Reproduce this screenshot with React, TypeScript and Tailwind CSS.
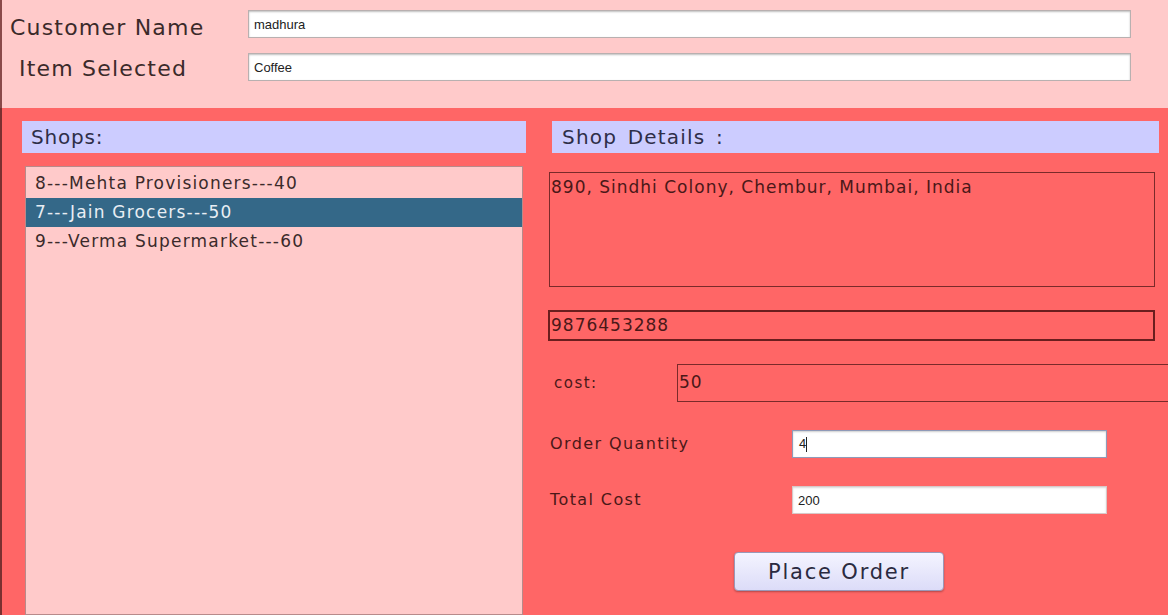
import React from "react";

const shops = [
  { id: 8, name: "Mehta Provisioners", cost: 40 },
  { id: 7, name: "Jain Grocers", cost: 50 },
  { id: 9, name: "Verma Supermarket", cost: 60 },
];

const font = { fontFamily: '"DejaVu Sans", "Open Sans", sans-serif' };
const arial = { fontFamily: '"Liberation Sans", Arial, sans-serif' };

export default function App() {
  return (
    <div
      className="w-[1168px] h-[615px] overflow-hidden flex flex-col text-[#3b2a2a]"
      style={font}
    >
      {/* customer info */}
      <div className="h-[108px] bg-[#ffcaca] border-l-2 border-[#8a4a4a] flex flex-col pt-[10px] gap-[15px]">
        <div className="flex items-center h-[28px]">
          <span className="w-[246px] pl-[8px] pt-[6px] text-[22px] tracking-[1.2px]">Customer Name</span>
          <input
            readOnly
            value="madhura"
            className="w-[883px] h-[28px] bg-white border border-[#b8b0b0] shadow-[inset_0_1px_2px_rgba(0,0,0,0.25)] px-[5px] text-[13px] text-[#222] outline-none"
            style={arial}
          />
        </div>
        <div className="flex items-center h-[28px]">
          <span className="w-[246px] pl-[17px] pt-[2px] text-[22px] tracking-[1.2px]">Item Selected</span>
          <input
            readOnly
            value="Coffee"
            className="w-[883px] h-[28px] bg-white border border-[#b8b0b0] shadow-[inset_0_1px_2px_rgba(0,0,0,0.25)] px-[5px] text-[13px] text-[#222] outline-none"
            style={arial}
          />
        </div>
      </div>

      {/* order panel */}
      <div className="flex-1 bg-[#ff6666] border-l-2 border-[#7a3030] flex min-h-0">
        {/* shops */}
        <div className="w-[504px] ml-[20px] flex flex-col pt-[13px]">
          <div className="h-[32px] bg-[#ccccff] pl-[9px] flex items-center text-[20px] tracking-[0.8px] text-[#2e2e48]">
            Shops:
          </div>
          <div className="flex-1 mt-[13px] mx-[3px] bg-[#ffcaca] border border-[#b88a8a] pt-[2px]">
            {shops.map((s) => (
              <div
                key={s.id}
                className={
                  s.id === 7
                    ? "h-[29px] pl-[9px] flex items-center text-[17px] tracking-[1.2px] bg-[#346888] text-[#e8eef4]"
                    : "h-[29px] pl-[9px] flex items-center text-[17px] tracking-[1.2px] text-[#3b2a2a]"
                }
              >
                {s.id}---{s.name}---{s.cost}
              </div>
            ))}
          </div>
        </div>

        {/* details */}
        <div className="flex-1 ml-[22px] flex flex-col pt-[13px] text-[#4a1818]">
          <div className="h-[32px] w-[607px] ml-[4px] bg-[#ccccff] pl-[10px] flex items-center text-[20px] tracking-[1.2px] [word-spacing:3px] text-[#2e2e48]">
            Shop Details :
          </div>
          <div className="mt-[19px] ml-[1px] w-[606px] h-[115px] border border-[#7a2a2a] text-[17px] tracking-[1px] pl-[1px] pt-[2px]">
            890, Sindhi Colony, Chembur, Mumbai, India
          </div>
          <div className="mt-[23px] w-[607px] h-[31px] border-2 border-[#6a1e1e] flex items-center pl-[1px] text-[17px] tracking-[1px]">
            9876453288
          </div>
          <div className="mt-[23px] h-[38px] flex items-center">
            <span className="w-[129px] pl-[6px] text-[15px] tracking-[1.5px]">cost:</span>
            <div className="flex-1 h-[38px] border border-[#7a2a2a] border-r-0 flex items-center pl-[1px] text-[17px] tracking-[1px]">
              50
            </div>
          </div>
          <div className="mt-[28px] h-[28px] flex items-center">
            <span className="w-[244px] pl-[2px] text-[16px] tracking-[1.4px]">Order Quantity</span>
            <div
              className="w-[315px] h-[28px] bg-white border border-[#8f9ab8] shadow-[inset_0_1px_2px_rgba(0,0,0,0.2)] flex items-center pl-[6px] text-[13px] text-[#222]"
              style={arial}
            >
              4<span className="w-px h-[15px] bg-[#222]" />
            </div>
          </div>
          <div className="mt-[28px] h-[28px] flex items-center">
            <span className="w-[244px] pl-[2px] text-[16px] tracking-[1.4px]">Total Cost</span>
            <input
              readOnly
              value="200"
              className="w-[315px] h-[28px] bg-white border border-[#d8c8c8] shadow-[inset_0_1px_2px_rgba(0,0,0,0.15)] pl-[5px] text-[13px] text-[#222] outline-none"
              style={arial}
            />
          </div>
          <div className="mt-[38px] pl-[186px]">
            <button className="w-[210px] h-[39px] rounded-[4px] border border-[#9a98b8] bg-gradient-to-b from-[#f4f4ff] to-[#dcdcf8] shadow-[0_1px_2px_rgba(0,0,0,0.3)] pt-[2px] text-[21px] tracking-[1.8px] text-[#2a2a40]">
              Place Order
            </button>
          </div>
        </div>
      </div>
    </div>
  );
}
